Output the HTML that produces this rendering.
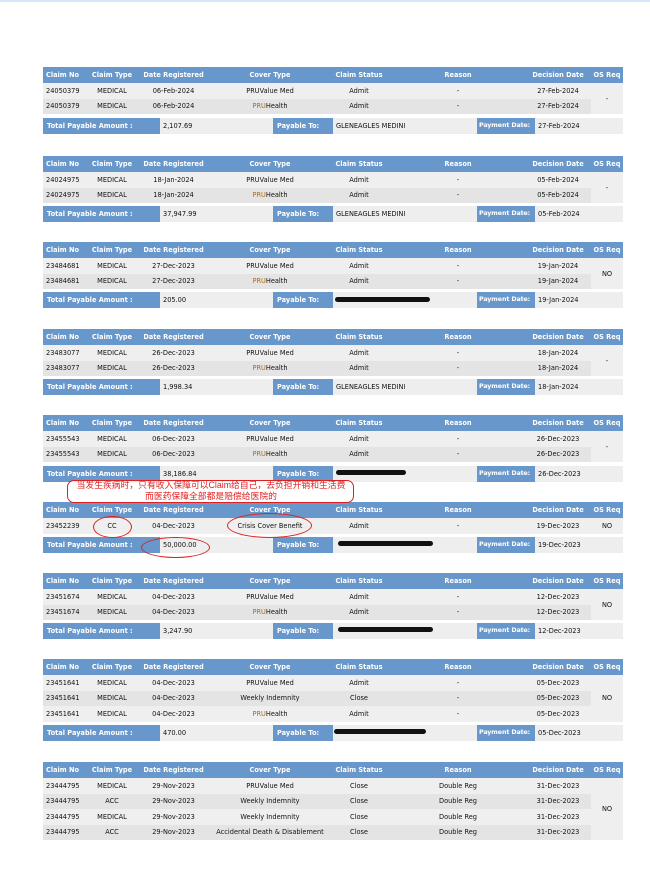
<!DOCTYPE html>
<html><head><meta charset="utf-8"><style>
body{margin:0;width:650px;height:879px;background:#fff;position:relative;overflow:hidden;font-family:"DejaVu Sans","Liberation Sans",sans-serif;font-size:6.6px;color:#111}
.topbar{position:absolute;left:0;top:0;width:650px;height:2px;background:#d6e8f8}
table{position:absolute;left:43px;width:580px;border-collapse:collapse;table-layout:fixed}
th{background:#6897cb;color:#fff;font-weight:bold;height:16px;padding:0;text-align:center;white-space:nowrap}
th.l,td.l{text-align:left;padding-left:3px}
td{height:15.5px;padding:0;text-align:center;background:#efefef;white-space:nowrap}
tr.b td{background:#e4e4e4}
td.os{background:#efefef!important}
.tot{position:absolute;left:43px;width:580px;height:16px}
.tot div{position:absolute;top:0;height:16px;line-height:16px;white-space:nowrap;overflow:hidden}
.bl{background:#6897cb;color:#fff;font-weight:bold;padding-left:4px;box-sizing:border-box}
.gr{background:#eeeeee;padding-left:3px;box-sizing:border-box}
.pd{padding-left:2px!important;font-size:6.3px;letter-spacing:-0.1px}
.pru{color:#b06a10}
.red{position:absolute;border:1.5px solid #e02020;border-radius:50%}
.scr{position:absolute;background:#111;border-radius:3px;height:5px}
</style></head><body>
<div class="topbar"></div>

<table style="top:67px"><colgroup><col style="width:47px"><col style="width:44px"><col style="width:79px"><col style="width:114px"><col style="width:64px"><col style="width:134px"><col style="width:66px"><col style="width:32px"></colgroup>
<tr><th class="l">Claim No</th><th>Claim Type</th><th>Date Registered</th><th>Cover Type</th><th>Claim Status</th><th>Reason</th><th>Decision Date</th><th>OS Req</th></tr>
<tr><td class="l">24050379</td><td>MEDICAL</td><td>06-Feb-2024</td><td>PRUValue Med</td><td>Admit</td><td>-</td><td>27-Feb-2024</td><td class="os" rowspan="2">-</td></tr>
<tr class="b"><td class="l">24050379</td><td>MEDICAL</td><td>06-Feb-2024</td><td><span class="pru">PRU</span>Health</td><td>Admit</td><td>-</td><td>27-Feb-2024</td></tr></table>
<div class="tot" style="top:118px"><div class="bl" style="left:0;width:117px">Total Payable Amount :</div><div class="gr" style="left:117px;width:113px">2,107.69</div><div class="bl" style="left:230px;width:60px">Payable To:</div><div class="gr" style="left:290px;width:144px">GLENEAGLES MEDINI</div><div class="bl pd" style="left:434px;width:58px">Payment Date:</div><div class="gr" style="left:492px;width:88px">27-Feb-2024</div></div>

<table style="top:156px"><colgroup><col style="width:47px"><col style="width:44px"><col style="width:79px"><col style="width:114px"><col style="width:64px"><col style="width:134px"><col style="width:66px"><col style="width:32px"></colgroup>
<tr><th class="l">Claim No</th><th>Claim Type</th><th>Date Registered</th><th>Cover Type</th><th>Claim Status</th><th>Reason</th><th>Decision Date</th><th>OS Req</th></tr>
<tr><td class="l">24024975</td><td>MEDICAL</td><td>18-Jan-2024</td><td>PRUValue Med</td><td>Admit</td><td>-</td><td>05-Feb-2024</td><td class="os" rowspan="2">-</td></tr>
<tr class="b"><td class="l">24024975</td><td>MEDICAL</td><td>18-Jan-2024</td><td><span class="pru">PRU</span>Health</td><td>Admit</td><td>-</td><td>05-Feb-2024</td></tr></table>
<div class="tot" style="top:206px"><div class="bl" style="left:0;width:117px">Total Payable Amount :</div><div class="gr" style="left:117px;width:113px">37,947.99</div><div class="bl" style="left:230px;width:60px">Payable To:</div><div class="gr" style="left:290px;width:144px">GLENEAGLES MEDINI</div><div class="bl pd" style="left:434px;width:58px">Payment Date:</div><div class="gr" style="left:492px;width:88px">05-Feb-2024</div></div>

<table style="top:242px"><colgroup><col style="width:47px"><col style="width:44px"><col style="width:79px"><col style="width:114px"><col style="width:64px"><col style="width:134px"><col style="width:66px"><col style="width:32px"></colgroup>
<tr><th class="l">Claim No</th><th>Claim Type</th><th>Date Registered</th><th>Cover Type</th><th>Claim Status</th><th>Reason</th><th>Decision Date</th><th>OS Req</th></tr>
<tr><td class="l">23484681</td><td>MEDICAL</td><td>27-Dec-2023</td><td>PRUValue Med</td><td>Admit</td><td>-</td><td>19-Jan-2024</td><td class="os" rowspan="2">NO</td></tr>
<tr class="b"><td class="l">23484681</td><td>MEDICAL</td><td>27-Dec-2023</td><td><span class="pru">PRU</span>Health</td><td>Admit</td><td>-</td><td>19-Jan-2024</td></tr></table>
<div class="tot" style="top:292px"><div class="bl" style="left:0;width:117px">Total Payable Amount :</div><div class="gr" style="left:117px;width:113px">205.00</div><div class="bl" style="left:230px;width:60px">Payable To:</div><div class="gr" style="left:290px;width:144px"></div><div class="bl pd" style="left:434px;width:58px">Payment Date:</div><div class="gr" style="left:492px;width:88px">19-Jan-2024</div></div>
<div class="scr" style="left:335px;top:297px;width:95px"></div>

<table style="top:329px"><colgroup><col style="width:47px"><col style="width:44px"><col style="width:79px"><col style="width:114px"><col style="width:64px"><col style="width:134px"><col style="width:66px"><col style="width:32px"></colgroup>
<tr><th class="l">Claim No</th><th>Claim Type</th><th>Date Registered</th><th>Cover Type</th><th>Claim Status</th><th>Reason</th><th>Decision Date</th><th>OS Req</th></tr>
<tr><td class="l">23483077</td><td>MEDICAL</td><td>26-Dec-2023</td><td>PRUValue Med</td><td>Admit</td><td>-</td><td>18-Jan-2024</td><td class="os" rowspan="2">-</td></tr>
<tr class="b"><td class="l">23483077</td><td>MEDICAL</td><td>26-Dec-2023</td><td><span class="pru">PRU</span>Health</td><td>Admit</td><td>-</td><td>18-Jan-2024</td></tr></table>
<div class="tot" style="top:379px"><div class="bl" style="left:0;width:117px">Total Payable Amount :</div><div class="gr" style="left:117px;width:113px">1,998.34</div><div class="bl" style="left:230px;width:60px">Payable To:</div><div class="gr" style="left:290px;width:144px">GLENEAGLES MEDINI</div><div class="bl pd" style="left:434px;width:58px">Payment Date:</div><div class="gr" style="left:492px;width:88px">18-Jan-2024</div></div>

<table style="top:415px"><colgroup><col style="width:47px"><col style="width:44px"><col style="width:79px"><col style="width:114px"><col style="width:64px"><col style="width:134px"><col style="width:66px"><col style="width:32px"></colgroup>
<tr><th class="l">Claim No</th><th>Claim Type</th><th>Date Registered</th><th>Cover Type</th><th>Claim Status</th><th>Reason</th><th>Decision Date</th><th>OS Req</th></tr>
<tr><td class="l">23455543</td><td>MEDICAL</td><td>06-Dec-2023</td><td>PRUValue Med</td><td>Admit</td><td>-</td><td>26-Dec-2023</td><td class="os" rowspan="2">-</td></tr>
<tr class="b"><td class="l">23455543</td><td>MEDICAL</td><td>06-Dec-2023</td><td><span class="pru">PRU</span>Health</td><td>Admit</td><td>-</td><td>26-Dec-2023</td></tr></table>
<div class="tot" style="top:466px"><div class="bl" style="left:0;width:117px">Total Payable Amount :</div><div class="gr" style="left:117px;width:113px">38,186.84</div><div class="bl" style="left:230px;width:60px">Payable To:</div><div class="gr" style="left:290px;width:144px"></div><div class="bl pd" style="left:434px;width:58px">Payment Date:</div><div class="gr" style="left:492px;width:88px">26-Dec-2023</div></div>
<div class="scr" style="left:336px;top:470px;width:70px"></div>

<table style="top:502px"><colgroup><col style="width:47px"><col style="width:44px"><col style="width:79px"><col style="width:114px"><col style="width:64px"><col style="width:134px"><col style="width:66px"><col style="width:32px"></colgroup>
<tr><th class="l">Claim No</th><th>Claim Type</th><th>Date Registered</th><th>Cover Type</th><th>Claim Status</th><th>Reason</th><th>Decision Date</th><th>OS Req</th></tr>
<tr><td class="l">23452239</td><td>CC</td><td>04-Dec-2023</td><td>Crisis Cover Benefit</td><td>Admit</td><td>-</td><td>19-Dec-2023</td><td class="os">NO</td></tr></table>
<div class="tot" style="top:537px"><div class="bl" style="left:0;width:117px">Total Payable Amount :</div><div class="gr" style="left:117px;width:113px">50,000.00</div><div class="bl" style="left:230px;width:60px">Payable To:</div><div class="gr" style="left:290px;width:144px"></div><div class="bl pd" style="left:434px;width:58px">Payment Date:</div><div class="gr" style="left:492px;width:88px">19-Dec-2023</div></div>
<div class="scr" style="left:338px;top:541px;width:95px"></div>

<table style="top:573px"><colgroup><col style="width:47px"><col style="width:44px"><col style="width:79px"><col style="width:114px"><col style="width:64px"><col style="width:134px"><col style="width:66px"><col style="width:32px"></colgroup>
<tr><th class="l">Claim No</th><th>Claim Type</th><th>Date Registered</th><th>Cover Type</th><th>Claim Status</th><th>Reason</th><th>Decision Date</th><th>OS Req</th></tr>
<tr><td class="l">23451674</td><td>MEDICAL</td><td>04-Dec-2023</td><td>PRUValue Med</td><td>Admit</td><td>-</td><td>12-Dec-2023</td><td class="os" rowspan="2">NO</td></tr>
<tr class="b"><td class="l">23451674</td><td>MEDICAL</td><td>04-Dec-2023</td><td><span class="pru">PRU</span>Health</td><td>Admit</td><td>-</td><td>12-Dec-2023</td></tr></table>
<div class="tot" style="top:623px"><div class="bl" style="left:0;width:117px">Total Payable Amount :</div><div class="gr" style="left:117px;width:113px">3,247.90</div><div class="bl" style="left:230px;width:60px">Payable To:</div><div class="gr" style="left:290px;width:144px"></div><div class="bl pd" style="left:434px;width:58px">Payment Date:</div><div class="gr" style="left:492px;width:88px">12-Dec-2023</div></div>
<div class="scr" style="left:338px;top:627px;width:95px"></div>

<table style="top:659px"><colgroup><col style="width:47px"><col style="width:44px"><col style="width:79px"><col style="width:114px"><col style="width:64px"><col style="width:134px"><col style="width:66px"><col style="width:32px"></colgroup>
<tr><th class="l">Claim No</th><th>Claim Type</th><th>Date Registered</th><th>Cover Type</th><th>Claim Status</th><th>Reason</th><th>Decision Date</th><th>OS Req</th></tr>
<tr><td class="l">23451641</td><td>MEDICAL</td><td>04-Dec-2023</td><td>PRUValue Med</td><td>Admit</td><td>-</td><td>05-Dec-2023</td><td class="os" rowspan="3">NO</td></tr>
<tr class="b"><td class="l">23451641</td><td>MEDICAL</td><td>04-Dec-2023</td><td>Weekly Indemnity</td><td>Close</td><td>-</td><td>05-Dec-2023</td></tr>
<tr><td class="l">23451641</td><td>MEDICAL</td><td>04-Dec-2023</td><td><span class="pru">PRU</span>Health</td><td>Admit</td><td>-</td><td>05-Dec-2023</td></tr></table>
<div class="tot" style="top:725px"><div class="bl" style="left:0;width:117px">Total Payable Amount :</div><div class="gr" style="left:117px;width:113px">470.00</div><div class="bl" style="left:230px;width:60px">Payable To:</div><div class="gr" style="left:290px;width:144px"></div><div class="bl pd" style="left:434px;width:58px">Payment Date:</div><div class="gr" style="left:492px;width:88px">05-Dec-2023</div></div>
<div class="scr" style="left:334px;top:729px;width:92px"></div>

<table style="top:762px"><colgroup><col style="width:47px"><col style="width:44px"><col style="width:79px"><col style="width:114px"><col style="width:64px"><col style="width:134px"><col style="width:66px"><col style="width:32px"></colgroup>
<tr><th class="l">Claim No</th><th>Claim Type</th><th>Date Registered</th><th>Cover Type</th><th>Claim Status</th><th>Reason</th><th>Decision Date</th><th>OS Req</th></tr>
<tr><td class="l">23444795</td><td>MEDICAL</td><td>29-Nov-2023</td><td>PRUValue Med</td><td>Close</td><td>Double Reg</td><td>31-Dec-2023</td><td class="os" rowspan="4">NO</td></tr>
<tr class="b"><td class="l">23444795</td><td>ACC</td><td>29-Nov-2023</td><td>Weekly Indemnity</td><td>Close</td><td>Double Reg</td><td>31-Dec-2023</td></tr>
<tr><td class="l">23444795</td><td>MEDICAL</td><td>29-Nov-2023</td><td>Weekly Indemnity</td><td>Close</td><td>Double Reg</td><td>31-Dec-2023</td></tr>
<tr class="b"><td class="l">23444795</td><td>ACC</td><td>29-Nov-2023</td><td>Accidental Death &amp; Disablement</td><td>Close</td><td>Double Reg</td><td>31-Dec-2023</td></tr></table>

<!-- annotations -->
<div style="position:absolute;left:67px;top:480px;width:285px;height:21px;border:1.5px solid #e02020;border-radius:7px;background:rgba(255,255,255,0.85)"></div>
<div style="position:absolute;left:60px;top:480px;width:302px;text-align:center;color:#e02020;font-family:'Liberation Sans','Noto Sans CJK SC',sans-serif;font-size:8.8px;line-height:11px;white-space:nowrap">当发生疾病时，只有收入保障可以Claim给自己，去负担开销和生活费<br>而医药保障全部都是赔偿给医院的</div>
<div class="red" style="left:93px;top:516px;width:37px;height:20px"></div>
<div class="red" style="left:227px;top:513px;width:83px;height:23px"></div>
<div class="red" style="left:141px;top:537px;width:67px;height:19px"></div>
</body></html>
